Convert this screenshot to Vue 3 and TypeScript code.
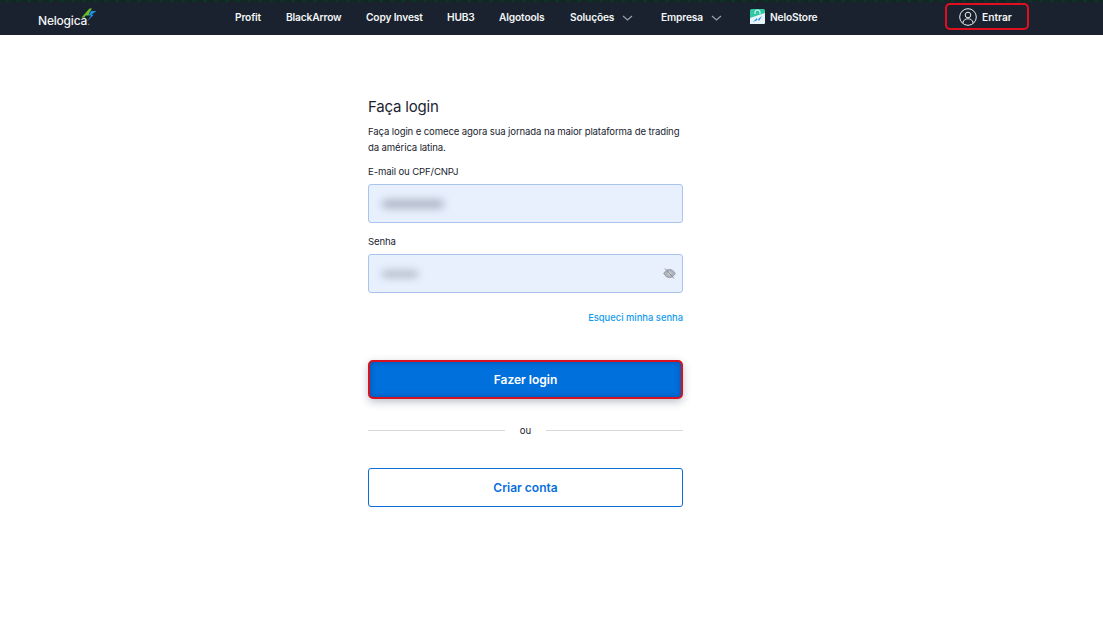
<script setup lang="ts">
const links: { label: string; width: number; chevron?: boolean }[] = [
  { label: 'Profit', width: 51 },
  { label: 'BlackArrow', width: 80 },
  { label: 'Copy Invest', width: 81 },
  { label: 'HUB3', width: 52 },
  { label: 'Algotools', width: 71 },
  { label: 'Soluções', width: 91, chevron: true },
  { label: 'Empresa', width: 89, chevron: true },
]
</script>

<template>
  <div class="page">
    <div class="strip"></div>
    <header class="header">
      <div class="logo">
        <span class="logo-text">Nelogica<i class="dot">.</i></span>
        <svg class="logo-mark" width="16" height="14" viewBox="0 0 16 14">
          <path d="M0.5 9.5 L8.5 0.5 L11 0.5 L8.5 4.5 L7.5 7.5 L4.5 7.5 L3.5 9.5 Z" fill="#6cc02c" />
          <path d="M15.5 3 L10 3 L7.5 7.5 L10 7.5 L6 13.5 L12.5 7 L10.8 6.5 Z" fill="#1b8fe0" />
        </svg>
      </div>
      <nav class="nav">
        <a v-for="l in links" :key="l.label" class="nav-link" :style="{ width: l.width + 'px' }">
          <span>{{ l.label }}</span>
          <svg v-if="l.chevron" class="chev" width="11" height="6" viewBox="0 0 11 6">
            <path d="M1 1 L5.5 5 L10 1" fill="none" stroke="#9aa1aa" stroke-width="1.2" />
          </svg>
        </a>
        <a class="nav-link store">
          <svg width="15" height="15" viewBox="0 0 15 15">
            <rect width="15" height="15" rx="1.5" fill="#2fc7a4" />
            <path d="M0 15 V9 L15 4 V13.5 A1.5 1.5 0 0 1 13.5 15 Z" fill="#e9f3fb" />
            <path d="M5 5 V3 A2.5 2 0 0 1 10 3 V5" fill="none" stroke="#fff" stroke-width="1" />
            <path d="M3 13 L7 9 L7 11 L12 7 L9 12 L8.5 10.5 Z" fill="#1b8fe0" />
          </svg>
          <span>NeloStore</span>
        </a>
      </nav>
      <a class="enter">
        <svg width="18" height="18" viewBox="0 0 18 18" fill="none" stroke="#e8eaed" stroke-width="1">
          <circle cx="9" cy="9" r="8.3" />
          <circle cx="9" cy="7" r="2.8" />
          <path d="M3.8 15 C4.5 11.8 6.5 10.8 9 10.8 C11.5 10.8 13.5 11.8 14.2 15" />
        </svg>
        <span>Entrar</span>
      </a>
    </header>

    <main class="main">
      <form class="form" @submit.prevent>
        <h1 class="title">Faça login</h1>
        <p class="intro">Faça login e comece agora sua jornada na maior plataforma de trading da américa latina.</p>

        <label class="label first">E-mail ou CPF/CNPJ</label>
        <div class="input">
          <span class="blur email"></span>
        </div>

        <label class="label second">Senha</label>
        <div class="input">
          <span class="blur pass"></span>
          <svg class="eye" width="13" height="11" viewBox="0 0 13 11" fill="none">
            <path d="M0.7 5.5 C2.5 2.5 4.5 1.5 6.5 1.5 C8.5 1.5 10.5 2.5 12.3 5.5 C10.5 8.5 8.5 9.5 6.5 9.5 C4.5 9.5 2.5 8.5 0.7 5.5 Z" fill="#aeb3bb" stroke="#989ea7" stroke-width="1" />
            <circle cx="6.5" cy="5.5" r="2" fill="#c9ced6" />
            <path d="M2 0.5 L11 10.5" stroke="#8a9099" stroke-width="1" />
          </svg>
        </div>

        <div class="forgot-row"><a class="forgot">Esqueci minha senha</a></div>

        <button class="btn-primary" type="button">Fazer login</button>

        <div class="divider"><span class="line"></span><span class="or">ou</span><span class="line"></span></div>

        <button class="btn-outline" type="button">Criar conta</button>
      </form>
    </main>
  </div>
</template>

<style>
html, body { margin: 0; background: #fff; }
</style>

<style scoped>
.page {
  height: 617px;
  overflow: hidden;
  background: #fff;
  font-family: Inter, "Liberation Sans", sans-serif;
  color: #1a2430;
}
.strip {
  height: 2px;
  background: repeating-linear-gradient(90deg, #0f2a1e 0 3px, #16241f 3px 5px, #0c3326 5px 9px, #19212b 9px 11px);
}
.header {
  height: 33px;
  background: #19222e;
  display: flex;
  align-items: center;
  padding-left: 38px;
  box-sizing: border-box;
  color: #fff;
}
.logo {
  width: 197px;
  height: 33px;
  position: relative;
  display: flex;
  align-items: center;
}
.logo-text {
  font-size: 12px;
  font-weight: 500;
  padding-top: 4px;
  letter-spacing: -0.2px;
  color: #f3f4f5;
}
.dot { font-style: normal; font-size: 9px; color: #9aa1aa; }
.logo-mark { position: absolute; left: 43px; top: 6px; }
.nav { display: flex; align-items: center; height: 33px; }
.nav-link {
  display: flex;
  align-items: center;
  font-size: 10.2px;
  font-weight: 600;
  letter-spacing: -0.15px;
  color: #f4f5f6;
  white-space: nowrap;
  padding-bottom: 4px;
}
.chev { margin-left: 8px; margin-top: 3px; }
.store { gap: 5px; width: 68px; }
.enter {
  margin-left: 127px;
  width: 84px;
  height: 27px;
  margin-top: -4px;
  box-sizing: border-box;
  border: 2px solid #e0101e;
  border-radius: 5px;
  display: flex;
  align-items: center;
  gap: 5px;
  padding-left: 12px;
  font-size: 10.2px;
  font-weight: 600;
  color: #f4f5f6;
}
.main { display: flex; justify-content: center; padding-right: 52px; }
.form { width: 315px; display: flex; flex-direction: column; padding-top: 61px; }
.title {
  margin: 0;
  font-size: 15px;
  line-height: 22px;
  font-weight: 400;
  letter-spacing: -0.2px;
  color: #1a2430;
}
.intro {
  margin: 6px 0 0;
  font-size: 9.6px;
  line-height: 16px;
  letter-spacing: -0.13px;
  color: #1a2430;
}
.label { font-size: 9.6px; line-height: 14px; letter-spacing: -0.13px; display: block; }
.label.first { margin-top: 9px; }
.label.second { margin-top: 12px; }
.input {
  margin-top: 5px;
  height: 39px;
  box-sizing: border-box;
  background: #e8f0fe;
  border: 1px solid #a9c5ee;
  border-radius: 3px;
  display: flex;
  align-items: center;
  justify-content: space-between;
  padding: 0 6px 0 8px;
}
.blur {
  display: block;
  height: 8px;
  border-radius: 4px;
  background: #a6aebc;
  filter: blur(4px);
}
.email { width: 62px; margin-left: 5px; }
.pass { width: 36px; margin-left: 5px; height: 6px; }
.eye { display: block; }
.forgot-row { display: flex; justify-content: flex-end; margin-top: 18px; line-height: 14px; }
.forgot { font-size: 9.4px; font-weight: 500; color: #0f9bf0; }
.btn-primary {
  margin-top: 35px;
  height: 39px;
  background: #0070dc;
  color: #fff;
  border: 2px solid #d8101f;
  border-radius: 5px;
  font-family: inherit;
  font-size: 12px;
  font-weight: 600;
  box-shadow: 0 3px 8px rgba(30, 50, 80, 0.3), inset 0 0 6px rgba(0, 40, 100, 0.4);
}
.divider { display: flex; align-items: center; margin-top: 23px; height: 16px; }
.line { flex: 1; height: 1px; background: #d8d8d8; }
.or { width: 41px; text-align: center; font-size: 9.6px; color: #1a2430; }
.btn-outline {
  margin-top: 30px;
  height: 39px;
  background: #fff;
  color: #0a6fdc;
  border: 1px solid #0a6fdc;
  border-radius: 3px;
  font-family: inherit;
  font-size: 12px;
  font-weight: 600;
}
</style>
